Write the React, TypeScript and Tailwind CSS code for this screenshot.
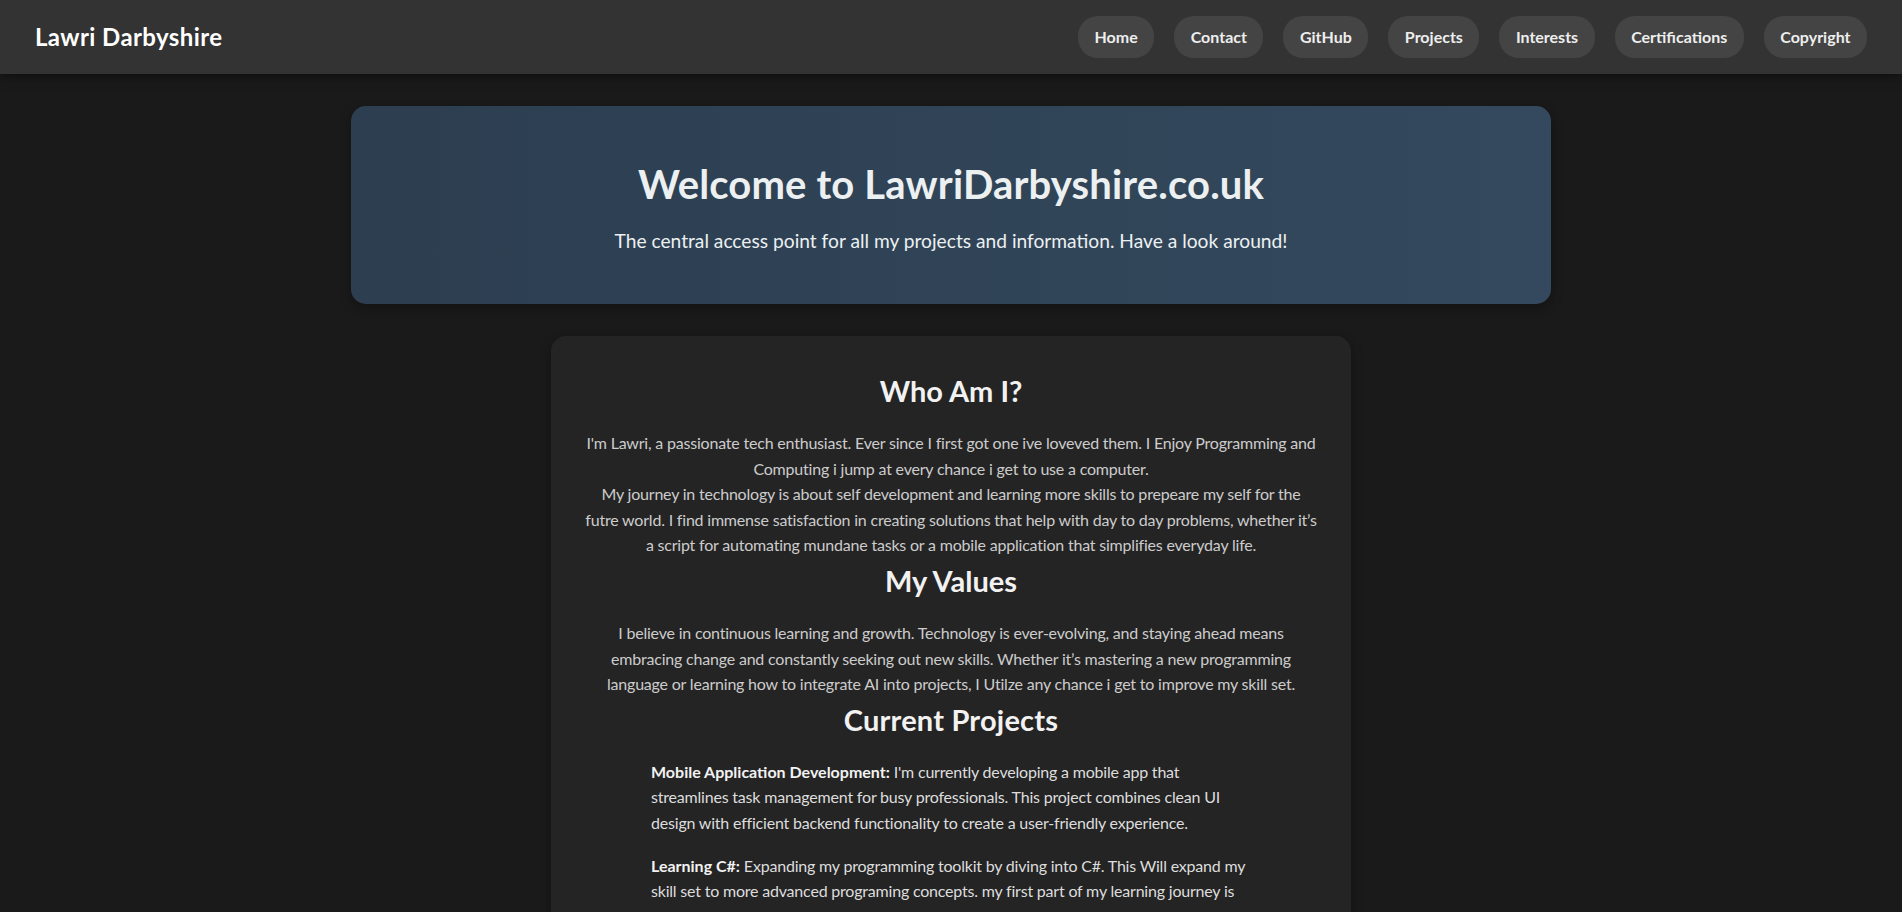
import React from 'react'

const links = ['Home', 'Contact', 'GitHub', 'Projects', 'Interests', 'Certifications', 'Copyright']

const projects = [
  {
    title: 'Mobile Application Development:',
    text: " I'm currently developing a mobile app that streamlines task management for busy professionals. This project combines clean UI design with efficient backend functionality to create a user-friendly experience.",
  },
  {
    title: 'Learning C#:',
    text: ' Expanding my programming toolkit by diving into C#. This Will expand my skill set to more advanced programing concepts. my first part of my learning journey is building small console applications to get comfortable with the syntax.',
  },
  {
    title: 'Personal Website:',
    text: ' Keeping this site up to date as the central access point for all my projects, certifications and interests.',
  },
]

export default function App() {
  return (
    <div className="min-h-screen bg-[#1a1a1a] font-['Lato',sans-serif] text-[#eee]">
      {/* top bar */}
      <header className="h-[74px] bg-[#333] flex items-center justify-between px-[35px] shadow-[0_2px_10px_rgba(0,0,0,0.5)]">
        <div className="text-2xl font-bold tracking-[0.4px] text-white">Lawri Darbyshire</div>
        <nav className="flex gap-5">
          {links.map((l) => (
            <a key={l} href="#" className="bg-[#444] rounded-[20px] px-[16.5px] py-2 text-base leading-[1.6] font-bold text-[#eee]">
              {l}
            </a>
          ))}
        </nav>
      </header>

      <main className="pt-8 pb-16 flex flex-col items-center">
        {/* welcome banner */}
        <section className="w-[1200px] rounded-[15px] bg-linear-to-r from-[#2c3e50] to-[#34495e] text-center pt-[54px] pb-[48px] text-[#ecf0f1] shadow-[0_4px_12px_rgba(0,0,0,0.3)]">
          <h1 className="text-[40px] leading-[48px] font-bold tracking-[0.15px]">Welcome to LawriDarbyshire.co.uk</h1>
          <p className="mt-[17px] text-[19.2px] leading-[31px]">
            The central access point for all my projects and information. Have a look around!
          </p>
        </section>

        {/* about card */}
        <section className="mt-8 w-[800px] rounded-[15px] bg-[#242424] px-[30px] pt-[32px] pb-8 text-center shadow-[0_4px_12px_rgba(0,0,0,0.3)]">
          <h2 className="mt-[5px] mb-[22px] text-[29px] leading-[35px] font-bold text-[#f2f2f2]">Who Am I?</h2>
          <p className="text-base leading-[1.6] tracking-[-0.2px] text-[#ccc]">
            I'm Lawri, a passionate tech enthusiast. Ever since I first got one ive loveved them. I Enjoy Programming and
            Computing i jump at every chance i get to use a computer.
            <br />
            My journey in technology is about self development and learning more skills to prepeare my self for the
            <br />
            futre world. I find immense satisfaction in creating solutions that help with day to day problems, whether it’s
            a script for automating mundane tasks or a mobile application that simplifies everyday life.
          </p>

          <h2 className="mt-[5px] mb-[22px] text-[29px] leading-[35px] font-bold text-[#f2f2f2]">My Values</h2>
          <p className="text-base leading-[1.6] tracking-[-0.2px] text-[#ccc]">
            I believe in continuous learning and growth. Technology is ever-evolving, and staying ahead means embracing
            change and constantly seeking out new skills. Whether it’s mastering a new programming language or learning how
            to integrate AI into projects, I Utilze any chance i get to improve my skill set.
          </p>

          <h2 className="mt-[5px] mb-[22px] text-[29px] leading-[35px] font-bold tracking-[0.2px] text-[#f2f2f2]">Current Projects</h2>
          <ul className="mx-auto max-w-[600px] text-left">
            {projects.map((p) => (
              <li key={p.title} className="mb-[17px] text-base leading-[1.6] tracking-[-0.2px] text-[#ddd]">
                <strong className="font-bold tracking-normal text-[#f2f2f2]">{p.title}</strong>
                {p.text}
              </li>
            ))}
          </ul>
        </section>
      </main>
    </div>
  )
}
